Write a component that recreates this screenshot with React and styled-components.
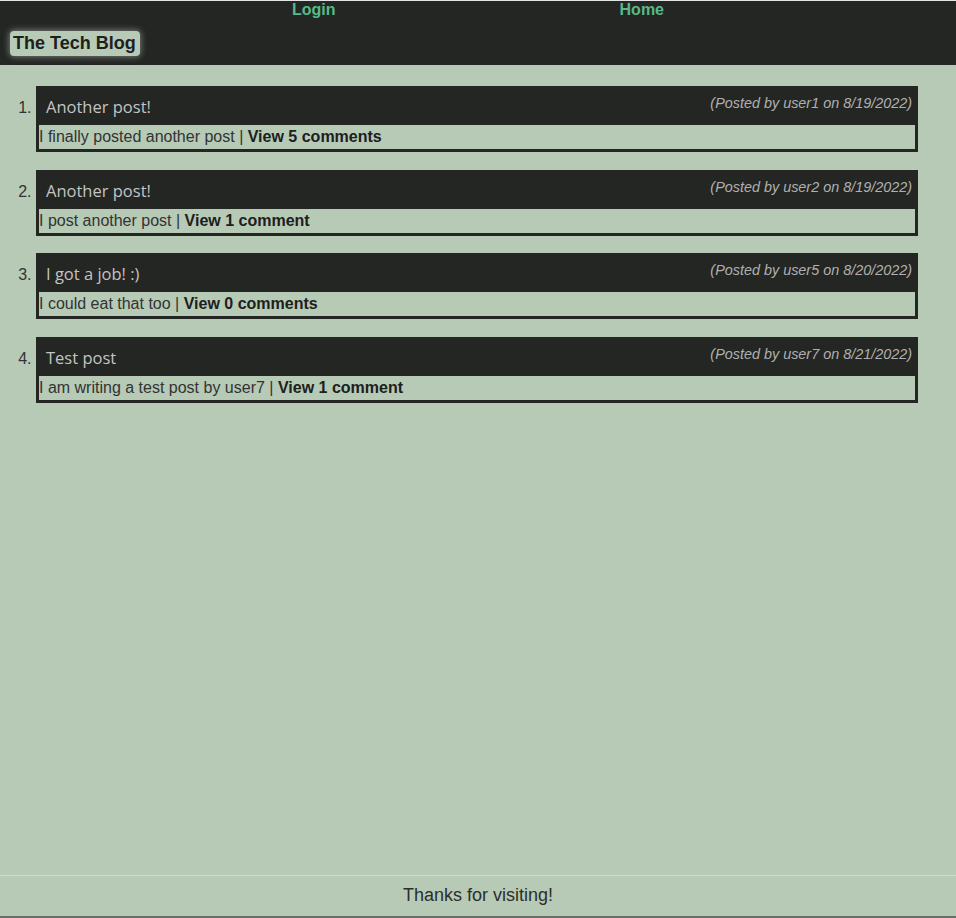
import React from 'react'
import styled, { createGlobalStyle } from 'styled-components'

const posts = [
  { title: 'Another post!', user: 'user1', date: '8/19/2022', body: 'I finally posted another post', comments: 5 },
  { title: 'Another post!', user: 'user2', date: '8/19/2022', body: 'I post another post', comments: 1 },
  { title: 'I got a job! :)', user: 'user5', date: '8/20/2022', body: 'I could eat that too', comments: 0 },
  { title: 'Test post', user: 'user7', date: '8/21/2022', body: 'I am writing a test post by user7', comments: 1 },
]

const App = () => (
  <Page>
    <GlobalStyle />
    <Header>
      <Nav>
        <NavLink href='#'>Login</NavLink>
        <NavLink href='#'>Home</NavLink>
      </Nav>
      <Brand>The Tech Blog</Brand>
    </Header>
    <Main>
      <PostList>
        {posts.map((p, i) => (
          <PostItem key={i}>
            <PostHead>
              <PostTitle>{p.title}</PostTitle>
              <PostMeta>(Posted by {p.user} on {p.date})</PostMeta>
            </PostHead>
            <PostBody>
              {p.body} | <strong>View {p.comments} {p.comments === 1 ? 'comment' : 'comments'}</strong>
            </PostBody>
          </PostItem>
        ))}
      </PostList>
    </Main>
    <Footer>Thanks for visiting!</Footer>
  </Page>
)

const GlobalStyle = createGlobalStyle`
  body {
    margin: 0;
    background: #b6cab6;
    font-family: 'Liberation Sans', Arial, sans-serif;
    color: #333;
  }
`

const Page = styled.div`
  min-height: 100vh;
  display: flex;
  flex-direction: column;
  box-sizing: border-box;
`

const Header = styled.header`
  background: #232623;
  border-top: 1px solid #e4e4e4;
  height: 64px;
  box-sizing: content-box;
`

const Nav = styled.nav`
  display: flex;
  justify-content: space-around;
  width: 656px;
  margin: 0 auto;
  height: 18px;
`

const NavLink = styled.a`
  color: #58b98a;
  font-weight: bold;
  font-size: 16px;
  text-decoration: none;
  line-height: 18px;
`

const Brand = styled.h1`
  display: inline-block;
  margin: 12px 0 0 10px;
  padding: 2px 4px 2px 3px;
  font-size: 18px;
  line-height: 21px;
  font-weight: bold;
  color: #1d201d;
  background: #b6cab6;
  border-radius: 4px;
  box-shadow: 0 0 6px 1px rgba(200, 210, 200, 0.5);
`

const Main = styled.main`
  flex: 1;
  padding-top: 21px;
`

const PostList = styled.ol`
  margin: 0;
  padding: 0 38px 0 36px;
  font-size: 16px;
  color: #333;
`

const PostItem = styled.li`
  margin-bottom: 17.5px;
  &::marker {
    color: #333;
  }
`

const PostHead = styled.div`
  background: #232623;
  height: 39px;
  padding: 0 6px 0 10px;
  display: flex;
  justify-content: space-between;
  align-items: flex-start;
`

const PostTitle = styled.h2`
  margin: 0;
  padding-top: 11px;
  font-family: 'Open Sans', sans-serif;
  font-weight: normal;
  font-size: 16.5px;
  line-height: 20px;
  color: #c4c4c4;
`

const PostMeta = styled.span`
  padding-top: 9px;
  font-size: 14.4px;
  line-height: 16px;
  font-style: italic;
  color: #b0b0b0;
`

const PostBody = styled.div`
  border: 3px solid #232623;
  border-top: none;
  height: 24px;
  line-height: 24px;
  font-size: 16px;
  color: #333;

  strong {
    color: #1d201d;
  }
`

const Footer = styled.footer`
  border-top: 1px solid #d3dcd3;
  border-bottom: 2px solid #6a6e6a;
  height: 40px;
  line-height: 38px;
  text-align: center;
  font-size: 18px;
  color: #2c2e2c;
`

export default App
